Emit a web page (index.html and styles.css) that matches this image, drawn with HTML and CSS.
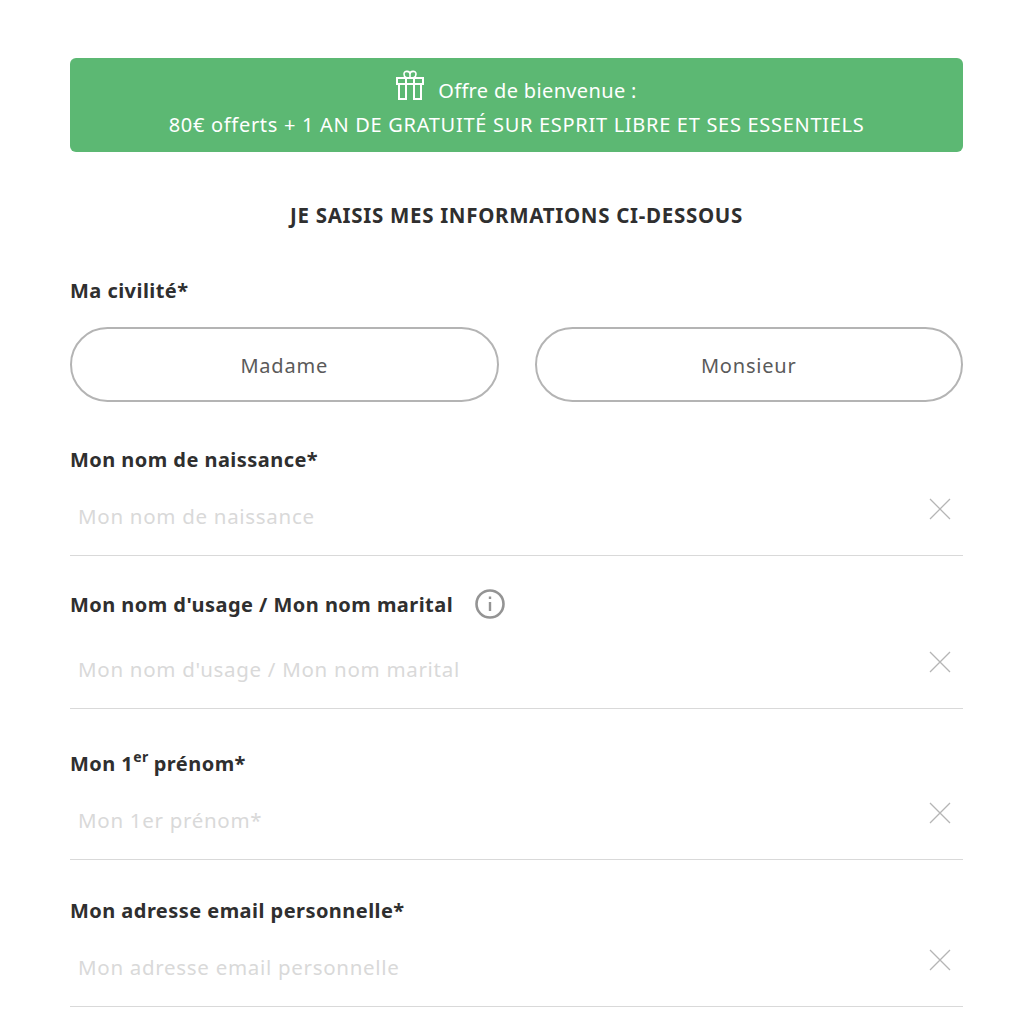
FILE: index.html
```html
<!DOCTYPE html>
<html lang="fr">
<head>
    <meta charset="UTF-8">
    <meta name="viewport" content="width=device-width, initial-scale=1.0">
    <title>Mes informations</title>
    <link rel="stylesheet" href="styles.css">
</head>
<body>
    <div class="promo">
        <p class="promoTop">
            <svg class="gift" viewBox="0 0 28 30" fill="none" stroke="#fff" stroke-width="2">
                <path d="M1 8h26v6H1zM10 8v21H3V14M18 8v21h7V14"/>
                <path d="M14 8V4C14 1 8 0 8 4S11 8 14 8C17 8 20 8 20 4S14 1 14 4" stroke-width="1.600"/>
            </svg>
            <span>Offre de bienvenue :</span>
        </p>
        <p class="promoBottom">80€ offerts + 1 AN DE GRATUITÉ SUR ESPRIT LIBRE ET SES ESSENTIELS</p>
    </div>

    <h1 class="formTitle">JE SAISIS MES INFORMATIONS CI-DESSOUS</h1>

    <form>
        <div class="lbl lblCivil">Ma civilité*</div>
        <div class="choices">
            <button type="button" class="choice">Madame</button>
            <button type="button" class="choice">Monsieur</button>
        </div>

        <div class="field fieldNaissance">
            <label class="lbl">Mon nom de naissance*</label>
            <div class="inputRow">
                <input class="ipt" type="text" placeholder="Mon nom de naissance">
                <svg class="clear" viewBox="0 0 22 22"><path d="M1 1l20 20M21 1L1 21"/></svg>
            </div>
        </div>

        <div class="field fieldUsage">
            <label class="lbl">
                Mon nom d'usage / Mon nom marital
                <svg class="info" viewBox="0 0 30 30" fill="none" stroke="#949494">
                    <circle cx="15" cy="15" r="13.500" stroke-width="2.600"/>
                    <path d="M15 13v9" stroke-width="2.400"/>
                    <path d="M15 7.500v2.500" stroke-width="2.400"/>
                </svg>
            </label>
            <div class="inputRow">
                <input class="ipt" type="text" placeholder="Mon nom d'usage / Mon nom marital">
                <svg class="clear" viewBox="0 0 22 22"><path d="M1 1l20 20M21 1L1 21"/></svg>
            </div>
        </div>

        <div class="field fieldPrenom">
            <label class="lbl">Mon 1<sup>er</sup> prénom*</label>
            <div class="inputRow">
                <input class="ipt" type="text" placeholder="Mon 1er prénom*">
                <svg class="clear" viewBox="0 0 22 22"><path d="M1 1l20 20M21 1L1 21"/></svg>
            </div>
        </div>

        <div class="field fieldEmail">
            <label class="lbl">Mon adresse email personnelle*</label>
            <div class="inputRow">
                <input class="ipt" type="text" placeholder="Mon adresse email personnelle">
                <svg class="clear" viewBox="0 0 22 22"><path d="M1 1l20 20M21 1L1 21"/></svg>
            </div>
        </div>
    </form>
</body>
</html>
```

FILE: styles.css
```css
/* page */
body {
    margin: 0;
    padding: 58px 61px 0 70px;
    background-color: #fff;
    font-family: "Noto Sans", "Open Sans", sans-serif;
    color: #2f2f2f;
}

/* bandeau vert */
.promo {
    height: 94px;
    background-color: #5cb873;
    border-radius: 6px;
    color: #fff;
    text-align: center;
    font-size: 20px;
}

.promo p {
    margin: 0;
}

.promoTop {
    height: 47px;
    display: flex;
    justify-content: center;
    align-items: flex-end;
    gap: 14px;
    line-height: 25px;
    letter-spacing: 0.35px;
}

.gift {
    width: 28px;
    height: 30px;
    margin-bottom: 5px;
}

.promoTop span {
    margin-bottom: 2px;
}

.promoBottom {
    line-height: 25px;
    letter-spacing: 0.7px;
    margin-top: 7px !important;
}

/* titre */
.formTitle {
    margin: 50px 0 0;
    font-size: 20.500px;
    line-height: 26px;
    font-weight: 700;
    letter-spacing: 0.7px;
    text-align: center;
}

/* libelles */
.lbl {
    display: flex;
    align-items: center;
    font-size: 20px;
    line-height: 26px;
    font-weight: 700;
    letter-spacing: 0.45px;
}

.lbl sup {
    font-size: 14px;
    line-height: 0;
    align-self: flex-start;
    margin: 6px 5px 0 0;
}

.lblCivil {
    margin-top: 50px;
}

/* boutons civilite */
.choices {
    display: flex;
    gap: 36px;
    margin-top: 23px;
}

.choice {
    flex: 1;
    height: 75px;
    padding-top: 3px;
    background: #fff;
    border: 2px solid #b4b4b4;
    border-radius: 38px;
    font-family: inherit;
    font-size: 20px;
    letter-spacing: 0.8px;
    color: #5a5a5a;
}

/* champs */
.inputRow {
    display: flex;
    align-items: flex-end;
    height: 83px;
    border-bottom: 1px solid #d9d9d9;
    box-sizing: border-box;
}

.ipt {
    flex: 1;
    height: 52px;
    margin-bottom: 13px;
    padding: 0 0 0 8px;
    border: none;
    outline: none;
    background: transparent;
    font-family: inherit;
    font-size: 20.500px;
    letter-spacing: 0.7px;
}

.ipt::placeholder {
    color: #d9d9d9;
    opacity: 1;
}

.clear {
    width: 22px;
    height: 22px;
    margin: 0 12px 35px 0;
    fill: none;
    stroke: #b5b5b5;
    stroke-width: 1.300;
}

.info {
    width: 30px;
    height: 30px;
    margin-left: 22px;
    transform: translateY(-1px);
}

.fieldNaissance {
    margin-top: 45px;
}

.fieldUsage {
    margin-top: 34px;
}

.fieldUsage .inputRow {
    height: 89px;
}

.fieldPrenom {
    margin-top: 42px;
}

.fieldEmail {
    margin-top: 38px;
}
```
